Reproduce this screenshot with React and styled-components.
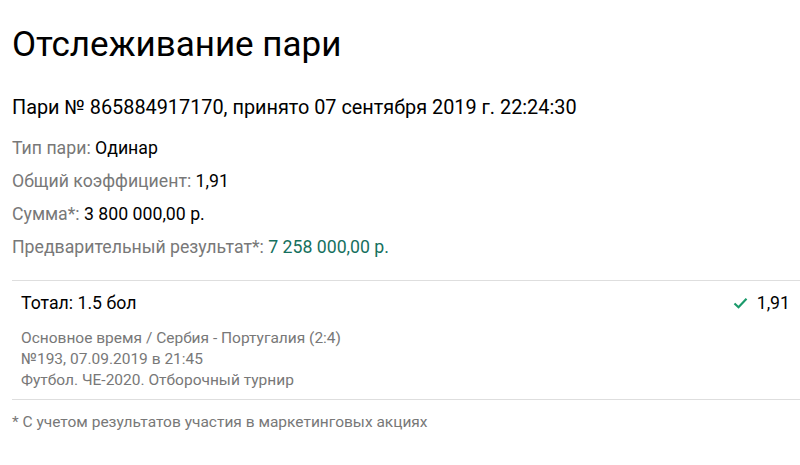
import React from 'react'
import styled, { createGlobalStyle } from 'styled-components'

const GlobalStyle = createGlobalStyle`
  body {
    margin: 0;
    background: #fff;
    font-family: Roboto, "Noto Sans", sans-serif;
    color: #000;
  }
`

const Page = styled.div`
  padding: 21px 0 0 12px;
`

const Title = styled.h1`
  margin: 0;
  font-size: 35px;
  font-weight: 400;
  line-height: 48px;
`

const BetHeader = styled.div`
  margin-top: 27px;
  font-size: 19.85px;
  line-height: 24px;
`

const InfoList = styled.div`
  margin: 12px 0 16px;
  display: flex;
  flex-direction: column;
`

const InfoRow = styled.div`
  font-size: 17.7px;
  line-height: 33px;
  color: #787878;
`

const Value = styled.span`
  color: ${p => (p.$green ? '#16705e' : '#000')};
`

const Divider = styled.div`
  border-top: 1px solid #dedede;
`

const Event = styled.div`
  padding: 10px 10px 8px 9px;
`

const EventTop = styled.div`
  display: flex;
  justify-content: space-between;
  align-items: center;
  font-size: 17.7px;
  line-height: 24px;
`

const Odds = styled.div`
  display: flex;
  align-items: center;
  gap: 9px;
`

const EventDetails = styled.div`
  margin-top: 13px;
  font-size: 15.5px;
  line-height: 21px;
  color: #787878;
`

const Footnote = styled.div`
  padding-top: 12px;
  font-size: 15.5px;
  line-height: 21px;
  color: #787878;
`

const Check = () => (
  <svg width="15" height="12" viewBox="0 0 15 12">
    <path d="M1.5 6.5 L5.5 10.2 L13.5 1.8" fill="none" stroke="#1b9a6b" strokeWidth="2.2" />
  </svg>
)

export default function App() {
  return (
    <>
      <GlobalStyle />
      <Page>
        <Title>Отслеживание пари</Title>
        <BetHeader>Пари № 865884917170, принято 07 сентября 2019 г. 22:24:30</BetHeader>
        <InfoList>
          <InfoRow>Тип пари: <Value>Одинар</Value></InfoRow>
          <InfoRow>Общий коэффициент: <Value>1,91</Value></InfoRow>
          <InfoRow>Сумма*: <Value>3 800 000,00 р.</Value></InfoRow>
          <InfoRow>Предварительный результат*: <Value $green>7 258 000,00 р.</Value></InfoRow>
        </InfoList>
        <Divider />
        <Event>
          <EventTop>
            <span>Тотал: 1.5 бол</span>
            <Odds><Check /><span>1,91</span></Odds>
          </EventTop>
          <EventDetails>
            Основное время / Сербия - Португалия (2:4)<br />
            №193, 07.09.2019 в 21:45<br />
            Футбол. ЧЕ-2020. Отборочный турнир
          </EventDetails>
        </Event>
        <Divider />
        <Footnote>* С учетом результатов участия в маркетинговых акциях</Footnote>
      </Page>
    </>
  )
}
